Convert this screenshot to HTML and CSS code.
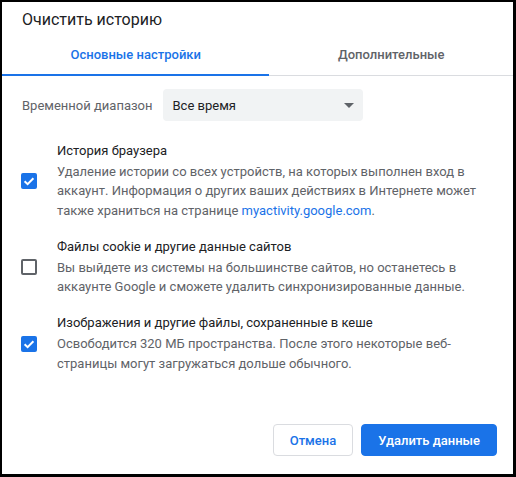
FILE: index.html
```html
<!doctype html>
<html lang="ru">
<head>
	<meta charset="UTF-8">
	<title>Очистить историю</title>
	<link rel="stylesheet" href="styles.css">
</head>
<body>
	<div class="dialog">
		<div class="title">Очистить историю</div>
		<div class="tabs">
			<div class="tab active">Основные настройки</div>
			<div class="tab">Дополнительные</div>
		</div>
		<div class="range">
			<span class="range-label">Временной диапазон</span>
			<div class="select">
				<span>Все время</span>
				<span class="arrow"></span>
			</div>
		</div>
		<ul class="items">
			<li class="item">
				<span class="check on">
					<svg width="16" height="16" viewBox="0 0 16 16"><polyline points="3.6,8.2 6.6,11.1 12.4,5.2" fill="none" stroke="#fff" stroke-width="2"/></svg>
				</span>
				<div class="text">
					<div class="item-title">История браузера</div>
					<div class="desc">Удаление истории со всех устройств, на которых выполнен вход в аккаунт. Информация о других ваших действиях в Интернете может также храниться на странице <a href="#">myactivity.google.com</a>.</div>
				</div>
			</li>
			<li class="item">
				<span class="check"></span>
				<div class="text">
					<div class="item-title">Файлы cookie и другие данные сайтов</div>
					<div class="desc">Вы выйдете из системы на большинстве сайтов, но останетесь в аккаунте Google и сможете удалить синхронизированные данные.</div>
				</div>
			</li>
			<li class="item">
				<span class="check on">
					<svg width="16" height="16" viewBox="0 0 16 16"><polyline points="3.6,8.2 6.6,11.1 12.4,5.2" fill="none" stroke="#fff" stroke-width="2"/></svg>
				</span>
				<div class="text">
					<div class="item-title">Изображения и другие файлы, сохраненные в кеше</div>
					<div class="desc">Освободится 320 МБ пространства. После этого некоторые веб-страницы могут загружаться дольше обычного.</div>
				</div>
			</li>
		</ul>
		<div class="footer">
			<button class="btn">Отмена</button>
			<button class="btn primary">Удалить данные</button>
		</div>
	</div>
</body>
</html>
```
FILE: styles.css
```css
*{
	margin: 0;
	padding: 0;
	box-sizing: border-box;
	list-style: none;
}
body{
	background: #000;
	font-family: Roboto, "Liberation Sans", sans-serif;
	font-size: 13px;
	color: #202124;
}
.dialog{
	width: 511px;
	height: 472px;
	margin: 2px 3px 3px 2px;
	background: #fff;
	display: flex;
	flex-direction: column;
}
.title{
	padding: 8px 20px 0;
	font-size: 16px;
	line-height: 20px;
	color: #202124;
}
.tabs{
	display: flex;
	border-bottom: 1px solid #dadce0;
}
.tab{
	flex: 1 1 auto;
	text-align: center;
	padding: 17px 0 11px;
	line-height: 16px;
	font-weight: 500;
	color: #5f6368;
	border-bottom: 2px solid transparent;
	margin-bottom: -1px;
}
.tab.active{
	color: #1a73e8;
	border-bottom-color: #1a73e8;
}
.range{
	display: flex;
	align-items: center;
	gap: 11px;
	margin-top: 13px;
	padding-left: 20px;
}
.range-label{
	color: #5f6368;
}
.select{
	width: 200px;
	height: 32px;
	background: #f1f3f4;
	border-radius: 4px;
	display: flex;
	align-items: center;
	justify-content: space-between;
	padding: 0 9px;
	color: #202124;
}
.arrow{
	width: 0;
	height: 0;
	border-left: 5px solid transparent;
	border-right: 5px solid transparent;
	border-top: 5px solid #5f6368;
	margin-top: 1px;
}
.items{
	margin-top: 20px;
	display: flex;
	flex-direction: column;
	gap: 17px;
}
.item{
	display: flex;
	align-items: center;
	gap: 20px;
	padding: 0 20px 0 19px;
}
.check{
	flex: none;
	width: 16px;
	height: 16px;
	border: 2px solid #5f6368;
	border-radius: 2px;
	margin-top: 1px;
}
.check.on{
	border: none;
	background: #1a73e8;
}
.check svg{
	display: block;
}
.item-title{
	line-height: 20px;
	color: #202124;
}
.desc{
	margin-top: 1px;
	line-height: 19.3px;
	color: #5f6368;
}
.desc a{
	color: #1a73e8;
	text-decoration: none;
}
.footer{
	margin-top: auto;
	display: flex;
	justify-content: flex-end;
	gap: 8px;
	padding: 0 16px 18px;
}
.btn{
	height: 32px;
	padding: 0 16px;
	border: 1px solid #dadce0;
	border-radius: 4px;
	background: #fff;
	color: #1a73e8;
	font-family: Roboto, "Liberation Sans", sans-serif;
	font-size: 13px;
	font-weight: 500;
}
.btn.primary{
	background: #1a73e8;
	border-color: #1a73e8;
	color: #fff;
}
```
